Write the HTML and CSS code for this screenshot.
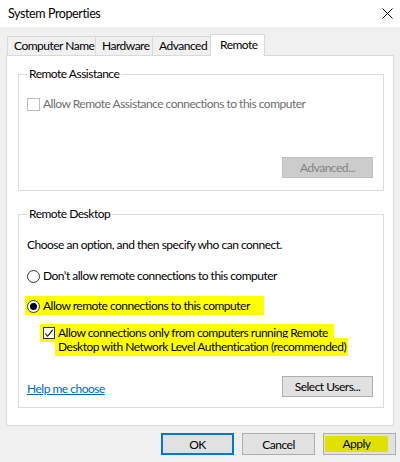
FILE: index.html
```html
<!DOCTYPE html>
<html lang="en">
<head>
<meta charset="utf-8">
<title>System Properties</title>
<link rel="stylesheet" href="styles.css">
</head>
<body>
<div class="window">
  <header class="titlebar">
    <span class="title">System Properties</span>
    <svg class="close" width="11" height="11" viewBox="0 0 11 11"><path d="M0.5 0.5 L10.5 10.5 M10.5 0.5 L0.5 10.5" stroke="#000" stroke-width="1" fill="none"/></svg>
  </header>
  <div class="tabs">
    <div class="tab tab-cn">Computer Name</div>
    <div class="tab tab-hw">Hardware</div>
    <div class="tab tab-adv">Advanced</div>
    <div class="tab tab-rem active">Remote</div>
  </div>
  <div class="panel">
    <fieldset class="group group-ra">
      <legend>Remote Assistance</legend>
      <div class="option disabled"><span class="box"></span><span>Allow Remote Assistance connections to this computer</span></div>
      <div class="btn-row"><button class="btn btn-wide" disabled>Advanced...</button></div>
    </fieldset>
    <fieldset class="group group-rd">
      <legend>Remote Desktop</legend>
      <p class="intro">Choose an option, and then specify who can connect.</p>
      <div class="option radio-opt"><span class="radio"></span><span>Don’t allow remote connections to this computer</span></div>
      <div class="option radio-opt hl-radio"><span class="radio checked"></span><span>Allow remote connections to this computer</span></div>
      <div class="option nla">
        <span class="box checked"><svg width="11" height="11" viewBox="0 0 11 11"><path d="M1.5 5.5 L4 8.5 L9.5 1.5" stroke="#000" stroke-width="1.2" fill="none"/></svg></span>
        <span class="nla-text"><span class="hl hl-1">Allow connections only from computers running Remote</span><span class="hl hl-2">Desktop with Network Level Authentication (recommended)</span></span>
      </div>
      <div class="rd-footer">
        <a class="help" href="#">Help me choose</a>
        <button class="btn btn-wide">Select Users...</button>
      </div>
    </fieldset>
  </div>
  <div class="actions">
    <button class="btn btn-default">OK</button>
    <button class="btn">Cancel</button>
    <button class="btn btn-apply"><span class="apply-hl">Apply</span></button>
  </div>
</div>
</body>
</html>
```
FILE: styles.css
```css
* { box-sizing: border-box; }
html, body { margin: 0; padding: 0; }
body {
  background: #f0f0f0;
  font-family: Lato, "Liberation Sans", sans-serif;
  font-size: 12px;
  letter-spacing: -0.5px;
  color: #000;
  width: 400px;
  height: 462px;
  overflow: hidden;
}
.window { width: 400px; }
.titlebar {
  height: 27px;
  background: #fff;
  display: flex;
  align-items: center;
  justify-content: space-between;
  padding: 0 7px 1px 8px;
}
.title { font-size: 12.5px; letter-spacing: -0.4px; }
.close { margin-top: 1px; }

.tabs {
  display: flex;
  align-items: flex-end;
  height: 28px;
  padding-left: 7px;
  position: relative;
  z-index: 1;
}
.tab {
  height: 19px;
  line-height: 18px;
  background: #f0f0f0;
  border: 1px solid #d9d9d9;
  border-bottom: none;
  border-right: none;
  padding-left: 6px;
  white-space: nowrap;
}
.tab-cn { width: 88px; }
.tab-hw { width: 57px; }
.tab-adv { width: 60px; border-right: 1px solid #d9d9d9; }
.tab.active {
  background: #fff;
  height: 22px;
  width: 55px;
  margin-left: -2px;
  margin-bottom: -1px;
  border: 1px solid #d9d9d9;
  border-bottom: none;
  padding-left: 9px;
  line-height: 20px;
}

.panel {
  margin-left: 6px;
  width: 388px;
  height: 371px;
  background: #fff;
  border: 1px solid #d9d9d9;
  padding: 10px 9px 0 11px;
}
.group {
  margin: 0;
  border: 1px solid #dcdcdc;
  padding: 0 10px 0 8px;
  min-width: 0;
}
.group legend {
  padding: 0 2px;
  margin-left: 0;
  line-height: 16px;
}
.group-ra { height: 125px; padding-top: 14px; }
.group-rd { margin-top: 15px; height: 202px; padding-top: 15px; }

.option {
  display: flex;
  align-items: center;
  gap: 3px;
  line-height: 16px;
  white-space: nowrap;
}
.option.disabled { color: #6d6d6d; }
.box {
  width: 13px;
  height: 13px;
  border: 1px solid #333;
  background: #fff;
  flex: none;
  display: flex;
  align-items: center;
  justify-content: center;
}
.disabled .box { border-color: #bcbcbc; }
.radio {
  width: 13px;
  height: 13px;
  border: 1px solid #333;
  border-radius: 50%;
  background: #fff;
  flex: none;
  display: flex;
  align-items: center;
  justify-content: center;
}
.radio.checked::after {
  content: "";
  width: 7px;
  height: 7px;
  border-radius: 50%;
  background: #000;
}
.btn-row { display: flex; justify-content: flex-end; margin-top: 45px; }
.btn {
  font: inherit;
  letter-spacing: inherit;
  height: 22px;
  width: 73px;
  background: #e1e1e1;
  border: 1px solid #adadad;
  color: #000;
  padding: 0;
}
.btn-wide { width: 91px; height: 21px; }
.btn:disabled { background: #cccccc; border-color: #bfbfbf; color: #838383; }

.intro { margin: 0; line-height: 16px; }
.radio-opt { margin-top: 15px; }
.hl-radio {
  width: fit-content;
  background: #ffff00;
  margin-left: -2px;
  padding: 2px 14px 1px 2px;
  margin-top: 12px;
}
.nla {
  margin-top: 11px;
  padding-left: 16px;
  align-items: flex-start;
  gap: 3px;
}
.nla .box { width: 12px; height: 12px; margin-top: 1px; box-shadow: 0 0 0 3px #ffff00; }
.nla-text { display: flex; flex-direction: column; line-height: 14px; }
.hl { background: #ffff00; display: block; width: fit-content; box-shadow: 0 0 0 2px #ffff00; }
.hl-1 { margin-left: -1px; padding-left: 1px; padding-right: 4px; }
.hl-2 { margin-left: -1px; padding-left: 1px; }

.rd-footer {
  display: flex;
  align-items: center;
  justify-content: space-between;
  margin-top: 22px;
}
.help { color: #0066cc; text-decoration: underline; margin-top: 3px; }

.actions {
  display: flex;
  justify-content: flex-end;
  gap: 8px;
  padding: 7px 4px 0 0;
}
.btn-default { border: 2px solid #0078d7; }
.btn-apply { display: flex; align-items: center; justify-content: center; padding: 2px; }
.apply-hl { background: #e1e100; display: block; width: 63px; height: 16px; line-height: 16px; margin-left: -6px; }
```
